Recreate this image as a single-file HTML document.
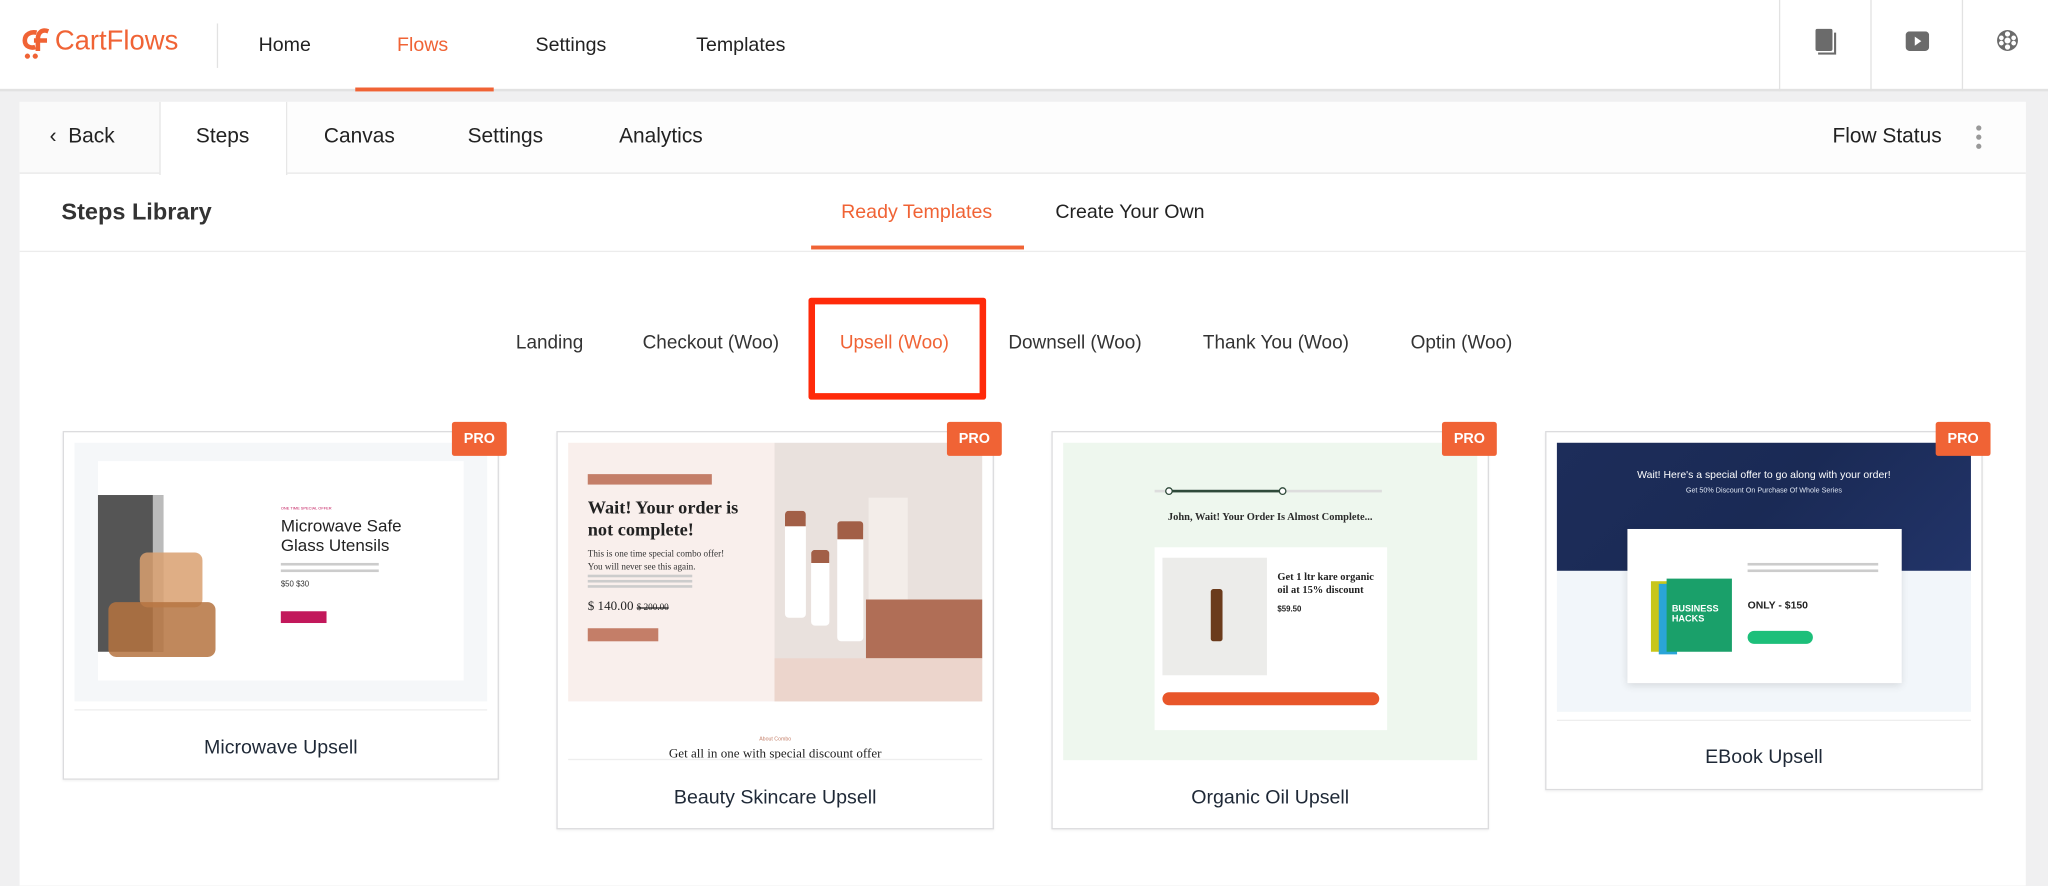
<!DOCTYPE html>
<html><head><meta charset="utf-8">
<style>
*{box-sizing:border-box;margin:0;padding:0}
html,body{width:2048px;height:874px;overflow:hidden;background:#f0f0f1;font-family:"Liberation Sans",Arial,sans-serif;color:#1f2937}
#w{position:absolute;left:0;top:0;width:1568px;height:669px;transform:scale(1.30612);transform-origin:0 0;background:#f0f0f1}
.a{position:absolute}
.t{position:absolute;white-space:nowrap}
.hdr{left:0;top:0;width:1568px;height:70px;background:#fff;border-bottom:2px solid #e2e2e2}
.nav{font-size:15px;color:#222;top:26px}
.panel{left:15px;top:78px;width:1536px;height:600px;background:#fff}
.tab{font-size:16px;color:#222;top:96px}
.card{background:#fff;border:1px solid #dcdcde;box-shadow:0 1px 2px rgba(0,0,0,.06)}
.pro{width:42px;height:26px;background:#f06335;color:#fff;font-size:11px;font-weight:bold;text-align:center;line-height:26px;border-radius:2px}
.ct{font-size:15px;color:#1f2937;text-align:center;width:100%;font-weight:500}
.cat{font-size:14.5px;color:#333;top:255px}
</style></head><body>
<div id="w">
<div class="a hdr"></div>
<svg class="a" style="left:15px;top:21px" width="24" height="26" viewBox="0 0 24 26"><path d="M13 4c-4-1-9 1-9 6s5 6 8 5" fill="none" stroke="#f06335" stroke-width="3.5"/><path d="M22 3c-5-2-8 1-8 6v9M11 10h10" fill="none" stroke="#f06335" stroke-width="3.5"/><circle cx="6" cy="22" r="2" fill="#f06335"/><circle cx="12" cy="22" r="2" fill="#f06335"/></svg>
<div class="t" style="left:42px;top:20px;font-size:21px;color:#f06335">CartFlows</div>
<div class="a" style="left:166px;top:18px;width:1px;height:34px;background:#e2e2e2"></div>
<div class="t nav" style="left:198px">Home</div>
<div class="t nav" style="left:304px;color:#f06335">Flows</div>
<div class="a" style="left:272px;top:67px;width:106px;height:3px;background:#f06335"></div>
<div class="t nav" style="left:410px">Settings</div>
<div class="t nav" style="left:533px">Templates</div>
<div class="a" style="left:1362px;top:0;width:1px;height:70px;background:#e2e2e2"></div>
<div class="a" style="left:1432px;top:0;width:1px;height:70px;background:#e2e2e2"></div>
<div class="a" style="left:1502px;top:0;width:1px;height:70px;background:#e2e2e2"></div>
<svg class="a" style="left:1389px;top:22px" width="18" height="20" viewBox="0 0 18 20"><rect x="1" y="0" width="13" height="17" rx="1.5" fill="#6b6b6b"/><path d="M3 19h13V3" fill="none" stroke="#6b6b6b" stroke-width="1.6"/></svg>
<svg class="a" style="left:1459px;top:24px" width="18" height="15" viewBox="0 0 18 15"><rect x="0" y="0" width="18" height="15" rx="3" fill="#6b6b6b"/><path d="M7 4l5 3.5-5 3.5z" fill="#fff"/></svg>
<svg class="a" style="left:1528px;top:22px" width="18" height="18" viewBox="0 0 18 18"><circle cx="9" cy="9" r="8" fill="#6b6b6b"/><circle cx="9" cy="9" r="2.3" fill="#fff"/><circle cx="9" cy="4" r="2" fill="#fff"/><circle cx="9" cy="14" r="2" fill="#fff"/><circle cx="4.3" cy="7" r="1.8" fill="#fff"/><circle cx="13.7" cy="11" r="1.8" fill="#fff"/><circle cx="13.7" cy="7" r="1.8" fill="#fff"/><circle cx="4.3" cy="11" r="1.8" fill="#fff"/></svg>

<div class="a panel"></div>
<div class="a" style="left:15px;top:132px;width:1536px;height:1px;background:#e6e6e6"></div>
<div class="a" style="left:15px;top:78px;width:108px;height:54px;background:#fafafa"></div>
<div class="a" style="left:122px;top:78px;width:98px;height:56px;background:#fff;border-left:1px solid #e6e6e6;border-right:1px solid #e6e6e6"></div>
<div class="a" style="left:220px;top:78px;width:1331px;height:54px;background:#fdfdfd"></div>
<div class="t tab" style="left:38px">‹&nbsp; Back</div>
<div class="t tab" style="left:150px">Steps</div>
<div class="t tab" style="left:248px">Canvas</div>
<div class="t tab" style="left:358px">Settings</div>
<div class="t tab" style="left:474px">Analytics</div>
<div class="t tab" style="left:1403px">Flow Status</div>
<div class="a" style="left:1513px;top:96px;width:4px;height:4px;border-radius:2px;background:#999;box-shadow:0 7px 0 #999,0 14px 0 #999"></div>

<div class="t" style="left:47px;top:152px;font-size:18px;font-weight:bold;color:#333">Steps Library</div>
<div class="t" style="left:644px;top:154px;font-size:15px;color:#f06335">Ready Templates</div>
<div class="a" style="left:621px;top:188px;width:163px;height:3px;background:#f06335"></div>
<div class="t" style="left:808px;top:154px;font-size:15px;color:#222">Create Your Own</div>
<div class="a" style="left:15px;top:192px;width:1536px;height:1px;background:#ececec"></div>

<div class="t cat" style="left:395px">Landing</div>
<div class="t cat" style="left:492px">Checkout (Woo)</div>
<div class="t cat" style="left:643px;color:#f06335">Upsell (Woo)</div>
<div class="t cat" style="left:772px">Downsell (Woo)</div>
<div class="t cat" style="left:921px">Thank You (Woo)</div>
<div class="t cat" style="left:1080px">Optin (Woo)</div>
<div class="a" style="left:619px;top:228px;width:136px;height:78px;border:5px solid #ff2a0a;border-radius:2px"></div>

<!-- card 1 -->
<div class="a card" style="left:48px;top:330px;width:334px;height:267px">
 <div class="a" style="left:8px;top:8px;width:316px;height:198px;background:#f5f7f9">
  <div class="a" style="left:18px;top:14px;width:280px;height:168px;background:#fff">
   <div class="a" style="left:0;top:26px;width:50px;height:120px;background:#555;border-right:8px solid #bbb"></div>
   <div class="a" style="left:32px;top:70px;width:48px;height:42px;background:#d9a070;border-radius:6px;opacity:.85"></div>
   <div class="a" style="left:8px;top:108px;width:82px;height:42px;background:#b5733f;border-radius:6px;opacity:.85"></div>
   <div class="t" style="left:140px;top:34px;font-size:3px;color:#c2185b">ONE TIME SPECIAL OFFER</div>
   <div class="t" style="left:140px;top:42px;font-size:13px;line-height:15px;color:#222">Microwave Safe<br>Glass Utensils</div>
   <div class="a" style="left:140px;top:78px;width:75px;height:2px;background:#ccc;box-shadow:0 5px 0 #ccc"></div>
   <div class="t" style="left:140px;top:92px;font-size:6px;color:#333">$50 $30</div>
   <div class="a" style="left:140px;top:115px;width:35px;height:9px;background:#c2185b"></div>
  </div>
 </div>
 <div class="a" style="left:8px;top:212px;width:316px;height:1px;background:#eee"></div>
 <div class="t ct" style="left:0;top:233px">Microwave Upsell</div>
</div>
<div class="a pro" style="left:346px;top:323px">PRO</div>

<!-- card 2 -->
<div class="a card" style="left:426px;top:330px;width:335px;height:305px">
 <div class="a" style="left:8px;top:8px;width:158px;height:198px;background:#f9efec">
  <div class="a" style="left:15px;top:24px;width:95px;height:8px;background:#c47e68"></div>
  <div class="t" style="left:15px;top:42px;font-family:'Liberation Serif',serif;font-weight:bold;font-size:14px;line-height:17px;color:#222">Wait! Your order is<br>not complete!</div>
  <div class="t" style="left:15px;top:80px;font-family:'Liberation Serif',serif;font-size:7px;line-height:10px;color:#333">This is one time special combo offer!<br>You will never see this again.</div>
  <div class="a" style="left:15px;top:101px;width:80px;height:2px;background:#ccc;box-shadow:0 4px 0 #ccc,0 8px 0 #ccc"></div>
  <div class="t" style="left:15px;top:120px;font-family:'Liberation Serif',serif;font-size:10px;color:#222">$ 140.00 <s style="font-size:7px">$ 200.00</s></div>
  <div class="a" style="left:15px;top:142px;width:54px;height:10px;background:#c47e68"></div>
 </div>
 <div class="a" style="left:166px;top:8px;width:159px;height:198px;background:#e9e1dd">
  <div class="a" style="left:8px;top:52px;width:16px;height:82px;background:#fff;border-top:12px solid #a25f47;border-radius:3px"></div>
  <div class="a" style="left:28px;top:82px;width:14px;height:58px;background:#fff;border-top:10px solid #a25f47;border-radius:3px"></div>
  <div class="a" style="left:48px;top:60px;width:20px;height:92px;background:#fff;border-top:14px solid #a25f47;border-radius:3px"></div>
  <div class="a" style="left:72px;top:42px;width:30px;height:110px;background:#f3ede9"></div>
  <div class="a" style="left:70px;top:120px;width:89px;height:45px;background:#b06e56"></div>
  <div class="a" style="left:0;top:165px;width:159px;height:33px;background:#ecd5cc"></div>
 </div>
 <div class="t" style="left:0;top:232px;width:100%;text-align:center;font-size:4px;color:#c47e68">About Combo</div>
 <div class="t" style="left:0;top:241px;width:100%;text-align:center;font-family:'Liberation Serif',serif;font-size:10px;color:#222;height:9px;overflow:hidden">Get all in one with special discount offer</div>
 <div class="a" style="left:8px;top:250px;width:317px;height:1px;background:#eee"></div>
 <div class="t ct" style="left:0;top:271px">Beauty Skincare Upsell</div>
</div>
<div class="a pro" style="left:725px;top:323px">PRO</div>

<!-- card 3 -->
<div class="a card" style="left:805px;top:330px;width:335px;height:305px">
 <div class="a" style="left:8px;top:8px;width:317px;height:243px;background:#eef7ee">
  <div class="a" style="left:70px;top:36px;width:174px;height:2px;background:#ddd"></div>
  <div class="a" style="left:80px;top:36px;width:88px;height:2px;background:#2f4a3a"></div>
  <div class="a" style="left:78px;top:34px;width:6px;height:6px;border:1.5px solid #2f4a3a;border-radius:50%;background:#fff"></div>
  <div class="a" style="left:165px;top:34px;width:6px;height:6px;border:1.5px solid #2f4a3a;border-radius:50%;background:#fff"></div>
  <div class="t" style="left:0;top:52px;width:100%;text-align:center;font-family:'Liberation Serif',serif;font-weight:bold;font-size:8px;color:#2b2b2b">John, Wait! Your Order Is Almost Complete...</div>
  <div class="a" style="left:70px;top:80px;width:178px;height:140px;background:#fff">
   <div class="a" style="left:6px;top:8px;width:80px;height:90px;background:#ececea"></div>
   <div class="a" style="left:43px;top:32px;width:9px;height:40px;background:#6b3b1c;border-radius:2px"></div>
   <div class="t" style="left:94px;top:18px;font-family:'Liberation Serif',serif;font-weight:bold;font-size:8px;line-height:10px;color:#222">Get 1 ltr kare organic<br>oil at 15% discount</div>
   <div class="t" style="left:94px;top:45px;font-size:6px;font-weight:bold;color:#222">$59.50</div>
   <div class="a" style="left:6px;top:111px;width:166px;height:10px;border-radius:6px;background:#e8562a"></div>
  </div>
 </div>
 <div class="t ct" style="left:0;top:271px">Organic Oil Upsell</div>
</div>
<div class="a pro" style="left:1104px;top:323px">PRO</div>

<!-- card 4 -->
<div class="a card" style="left:1183px;top:330px;width:335px;height:275px">
 <div class="a" style="left:8px;top:8px;width:317px;height:206px;background:#f2f6fa">
  <div class="a" style="left:0;top:0;width:317px;height:98px;background:linear-gradient(135deg,#1d2d5a,#1a2a55 50%,#223469)"></div>
  <div class="t" style="left:0;top:20px;width:100%;text-align:center;font-size:8px;color:#fff">Wait! Here's a special offer to go along with your order!</div>
  <div class="t" style="left:0;top:34px;width:100%;text-align:center;font-size:5.5px;color:#dfe6f3">Get 50% Discount On Purchase Of Whole Series</div>
  <div class="a" style="left:54px;top:66px;width:210px;height:118px;background:#fff;box-shadow:0 2px 6px rgba(0,0,0,.12)">
   <div class="a" style="left:18px;top:40px;width:14px;height:54px;background:#c8c61a"></div>
   <div class="a" style="left:24px;top:42px;width:14px;height:54px;background:#2aa5d8"></div>
   <div class="a" style="left:30px;top:38px;width:50px;height:56px;background:#1aa06a"></div>
   <div class="t" style="left:34px;top:58px;font-size:7px;line-height:8px;font-weight:bold;color:#fff">BUSINESS<br>HACKS</div>
   <div class="a" style="left:92px;top:26px;width:100px;height:2px;background:#ccc;box-shadow:0 5px 0 #ccc"></div>
   <div class="t" style="left:92px;top:54px;font-size:8px;font-weight:bold;color:#222">ONLY - $150</div>
   <div class="a" style="left:92px;top:78px;width:50px;height:10px;border-radius:6px;background:#1dbf7a"></div>
  </div>
 </div>
 <div class="a" style="left:8px;top:220px;width:317px;height:1px;background:#eee"></div>
 <div class="t ct" style="left:0;top:240px">EBook Upsell</div>
</div>
<div class="a pro" style="left:1482px;top:323px">PRO</div>
</div>
</body></html>
